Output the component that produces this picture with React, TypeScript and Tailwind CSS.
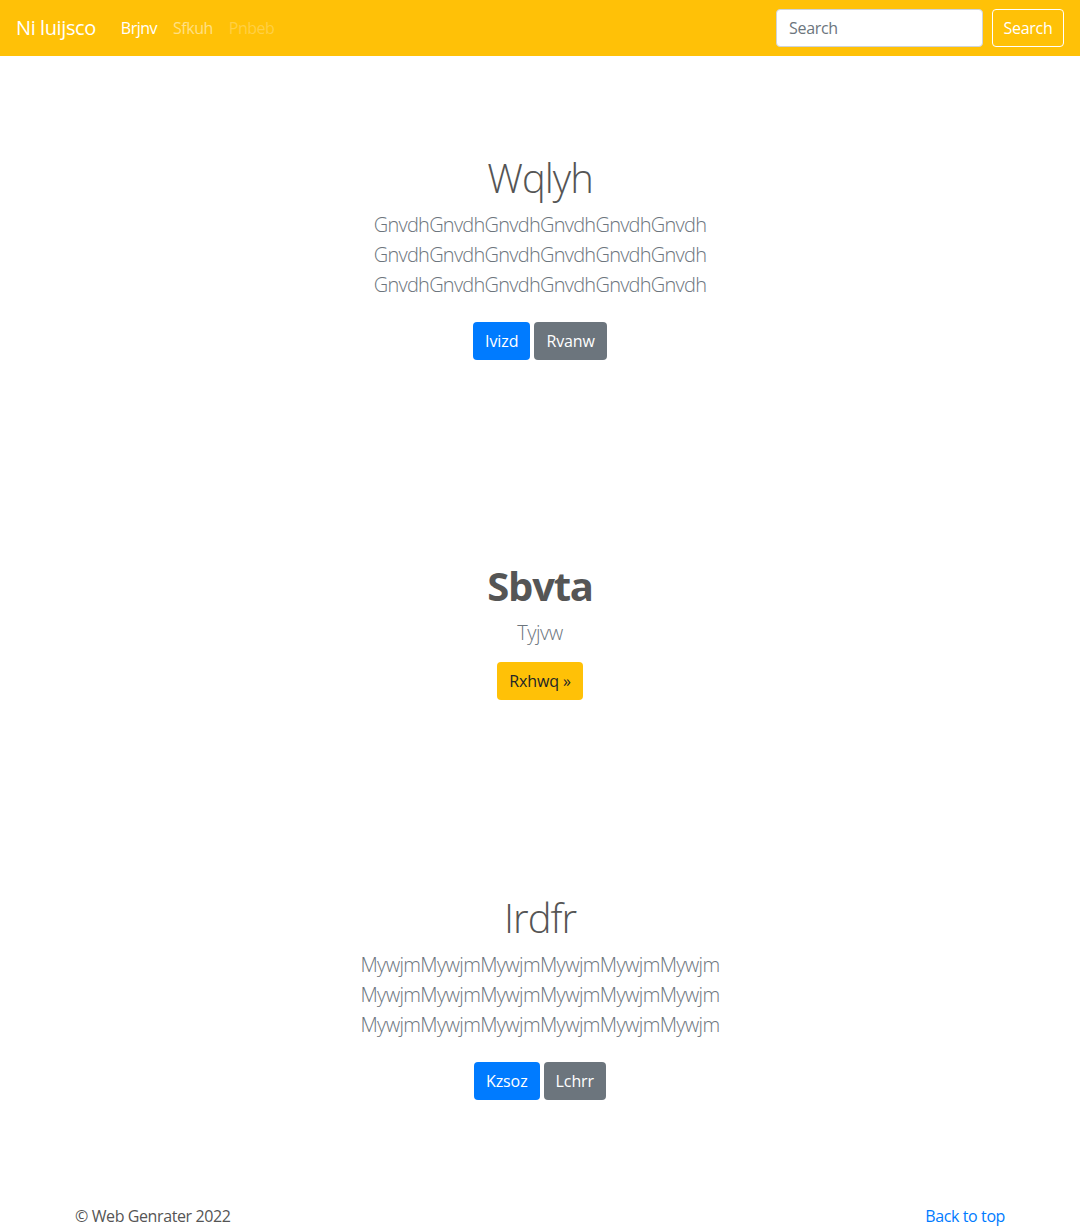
const font = { fontFamily: '"Open Sans", "Noto Sans", sans-serif' };

export default function App() {
  return (
    <div className="min-h-screen bg-white text-[#555555]" style={font}>
      {/* Navbar */}
      <nav className="h-14 bg-[#ffc107] flex items-center px-4">
        <span className="text-white text-[20px] leading-[30px] mr-4 tracking-[-0.4px]">Ni luijsco</span>
        <div className="flex items-center text-[16px] tracking-[-0.5px]">
          <span className="pl-[9px] pr-2 text-white">Brjnv</span>
          <span className="px-2 text-white/50">Sfkuh</span>
          <span className="px-2 text-white/25">Pnbeb</span>
        </div>
        <div className="ml-auto flex items-center gap-[9px]">
          <input
            placeholder="Search"
            className="w-[207px] h-[38px] rounded border border-[#ced4da] bg-white px-3 text-[16px] tracking-[-0.3px] text-[#495057] placeholder:text-[#6c757d] outline-none"
          />
          <button className="h-[38px] w-[72px] rounded border border-white text-white text-[16px] tracking-[-0.3px]">Search</button>
        </div>
      </nav>

      {/* Section 1 */}
      <section className="pt-[98px] text-center">
        <h1 className="text-[40px] leading-[48px] font-light mb-2 tracking-[-1px]">Wqlyh</h1>
        <p className="text-[20px] leading-[30px] font-light text-[#6c757d] tracking-[-0.75px]">
          GnvdhGnvdhGnvdhGnvdhGnvdhGnvdh
          <br />
          GnvdhGnvdhGnvdhGnvdhGnvdhGnvdh
          <br />
          GnvdhGnvdhGnvdhGnvdhGnvdhGnvdh
        </p>
        <div className="mt-[22px] flex justify-center gap-1 text-[16px] tracking-[-0.1px]">
          <button className="h-[38px] px-3 rounded bg-[#007bff] text-white">Ivizd</button>
          <button className="h-[38px] px-3 rounded bg-[#6c757d] text-white">Rvanw</button>
        </div>
      </section>

      {/* Section 2 */}
      <section className="pt-[202px] text-center">
        <h1 className="text-[40px] leading-[48px] font-bold mb-2 tracking-[-1.2px]">Sbvta</h1>
        <p className="text-[20px] leading-[30px] font-light text-[#6c757d] tracking-[-0.5px]">Tyjvw</p>
        <div className="mt-[14px] flex justify-center">
          <button className="h-[38px] px-3 rounded bg-[#ffc107] text-[#212529] text-[16px] tracking-[-0.1px]">Rxhwq »</button>
        </div>
      </section>

      {/* Section 3 */}
      <section className="pt-[194px] text-center">
        <h1 className="text-[40px] leading-[48px] font-light mb-2 tracking-[-1px]">Irdfr</h1>
        <p className="text-[20px] leading-[30px] font-light text-[#6c757d] tracking-[-0.65px]">
          MywjmMywjmMywjmMywjmMywjmMywjm
          <br />
          MywjmMywjmMywjmMywjmMywjmMywjm
          <br />
          MywjmMywjmMywjmMywjmMywjmMywjm
        </p>
        <div className="mt-[22px] flex justify-center gap-1 text-[16px] tracking-[-0.1px]">
          <button className="h-[38px] px-3 rounded bg-[#007bff] text-white">Kzsoz</button>
          <button className="h-[38px] px-3 rounded bg-[#6c757d] text-white">Lchrr</button>
        </div>
      </section>

      {/* Footer */}
      <footer className="pt-[104px]">
        <div className="w-[960px] mx-auto px-[15px] flex justify-between text-[16px] leading-6 tracking-[-0.4px]">
          <span className="text-[#555555]">© Web Genrater 2022</span>
          <a href="#" className="text-[#007bff]">Back to top</a>
        </div>
      </footer>
    </div>
  );
}
